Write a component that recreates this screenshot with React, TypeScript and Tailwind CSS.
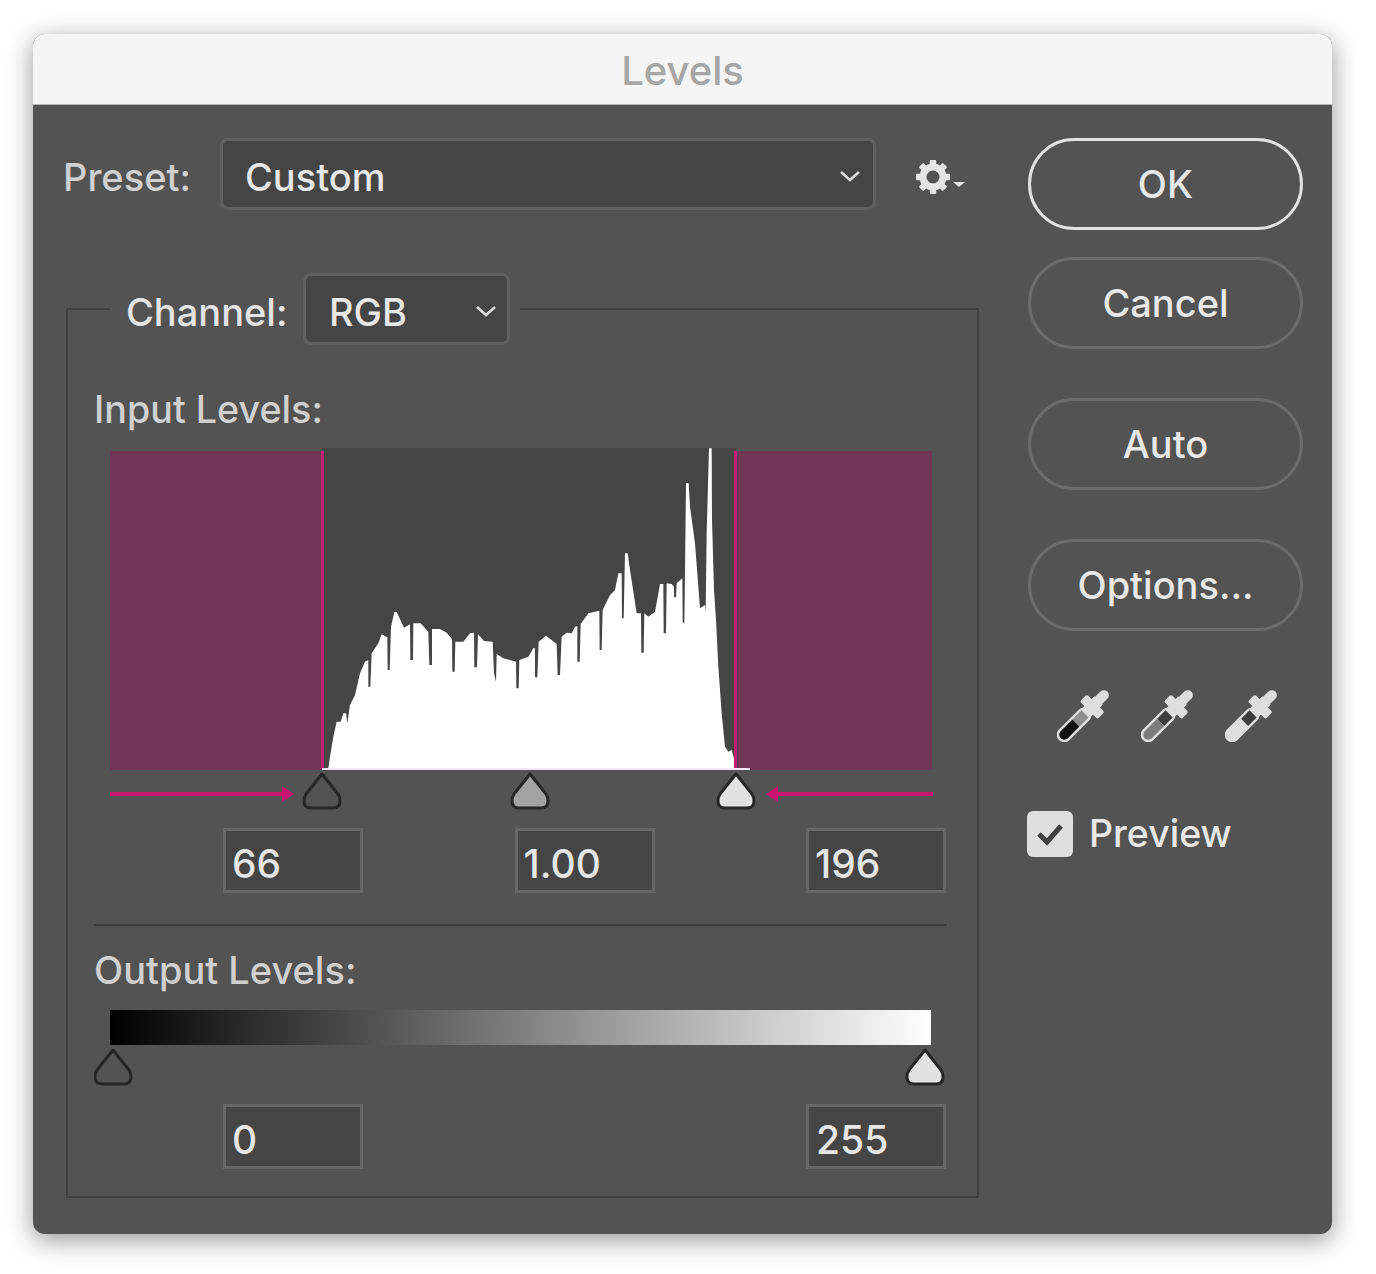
import React from "react";

const HIST: [number, number][] = [
  [70,985],[85,985],[90,950],[100,890],[110,845],[122,845],[130,820],[138,820],[142,850],[150,795],[165,765],[180,700],[195,665],[205,660],[205,740],[211,740],[215,640],[235,610],[245,583],[262,592],[263,690],[269,690],[273,560],[283,516],[290,516],[312,563],[330,553],[331,660],[339,660],[340,550],[362,550],[385,575],[388,675],[396,675],[396,567],[420,567],[440,578],[456,597],[457,695],[464,695],[466,605],[490,605],[510,580],[522,578],[523,682],[531,682],[534,583],[552,603],[578,605],[582,700],[588,725],[590,642],[610,655],[648,665],[649,745],[656,745],[658,660],[685,650],[700,625],[705,625],[705,712],[712,712],[716,605],[738,587],[770,612],[773,705],[780,705],[785,590],[800,578],[815,580],[825,560],[832,558],[832,665],[839,665],[842,552],[865,520],[898,512],[899,630],[905,630],[908,510],[930,465],[945,450],[955,400],[965,400],[966,535],[971,535],[975,340],[983,340],[990,390],[1010,520],[1023,520],[1024,638],[1031,638],[1033,520],[1045,530],[1065,515],[1080,432],[1090,432],[1091,580],[1098,580],[1100,430],[1115,432],[1122,440],[1122,472],[1128,472],[1130,430],[1147,415],[1148,548],[1153,548],[1155,400],[1158,130],[1166,130],[1170,200],[1185,310],[1200,505],[1215,495],[1217,515],[1220,280],[1227,25],[1235,25],[1236,240],[1242,450],[1248,540],[1255,680],[1265,820],[1275,920],[1285,935],[1295,930],[1303,960],[1305,985],
];
const histPoints = HIST.map(([x, y]) => `${300 + x / 3},${440 + y / 3}`).join(" ");

const THUMB = "M0 1 L16 21 Q18 24 18 28 Q18 35 11 35 H-11 Q-18 35 -18 28 Q-18 24 -16 21 Z";
function Thumb({ x, y, fill }: { x: number; y: number; fill: string }) {
  return <path d={THUMB} transform={`translate(${x} ${y})`} fill={fill} stroke="#262626" strokeWidth={3} strokeLinejoin="round" />;
}

function Histogram() {
  return (
    <svg width={822} height={322} viewBox="110 448 822 322" className="block">
      <rect x={322} y={448} width={414} height={322} fill="#454545" />
      <rect x={110} y={451} width={212} height={319} fill="#713655" />
      <rect x={735} y={451} width={197} height={319} fill="#713655" />
      <polygon points={histPoints} fill="#ffffff" />
      <rect x={321} y={451} width={3} height={318} fill="#b9216f" />
      <rect x={734} y={451} width={3} height={318} fill="#b9216f" />
      <rect x={322} y={768} width={428} height={2} fill="#f4e6ee" />
    </svg>
  );
}

function InputSliders() {
  return (
    <svg width={852} height={44} viewBox="94 770 852 44" className="block">
      <line x1={110} y1={794} x2={284} y2={794} stroke="#c8146f" strokeWidth={4} />
      <polygon points="294,794 282,786 282,802" fill="#c8146f" />
      <line x1={933} y1={794} x2={778} y2={794} stroke="#c8146f" strokeWidth={4} />
      <polygon points="766,794 778,786 778,802" fill="#c8146f" />
      <Thumb x={322} y={773} fill="#535353" />
      <Thumb x={530} y={773} fill="#a3a3a3" />
      <Thumb x={736} y={773} fill="#e2e2e2" />
    </svg>
  );
}

function OutputSliders() {
  return (
    <svg width={852} height={44} viewBox="94 1045 852 44" className="block">
      <Thumb x={113} y={1049} fill="#535353" />
      <Thumb x={925} y={1049} fill="#e2e2e2" />
    </svg>
  );
}

function Chevron() {
  return (
    <svg width={22} height={14} viewBox="0 0 22 14" fill="none" className="shrink-0 mt-[3px]">
      <path d="M2 3 L11 11 L20 3" stroke="#dcdcdc" strokeWidth={2.6} />
    </svg>
  );
}

function Gear() {
  const teeth = [0, 45, 90, 135, 180, 225, 270, 315];
  return (
    <svg width={50} height={36} viewBox="0 0 50 36" className="block">
      <g transform="translate(17 18)" fill="#e4e4e4">
        {teeth.map((a) => (
          <rect key={a} x={-3.2} y={-17} width={6.4} height={8} rx={1} transform={`rotate(${a})`} />
        ))}
        <circle r={10} fill="none" stroke="#e4e4e4" strokeWidth={7} />
      </g>
      <polygon points="37,23 49,23 43,28" fill="#e4e4e4" />
    </svg>
  );
}

function Dropper({ kind }: { kind: 0 | 1 | 2 }) {
  const light = "#dedede";
  return (
    <svg width={52} height={52} viewBox="-1 -1 52 52" className="block">
      <g transform="rotate(45 25 25)">
        <rect x={20} y={-9.5} width={10} height={24} rx={5} fill={light} />
        <rect x={12.5} y={7} width={25} height={10} rx={2} fill={light} />
        <rect x={19} y={3} width={12} height={18} fill={light} />
        <rect x={17.5} y={16} width={15} height={43} rx={7.5} fill={light} />
        {kind === 0 && (
          <>
            <rect x={20} y={22} width={10} height={13} fill="#8f8f8f" />
            <path d="M20 35 H30 V51.5 a5 5 0 0 1 -10 0 Z" fill="#111111" />
          </>
        )}
        {kind === 1 && (
          <>
            <rect x={20} y={22} width={10} height={12} fill="#3d3d3d" />
            <path d="M20 34 H30 V51.5 a5 5 0 0 1 -10 0 Z" fill="#7c7c7c" />
          </>
        )}
        {kind === 2 && <rect x={20} y={22} width={10} height={12} fill="#3d3d3d" />}
      </g>
    </svg>
  );
}

function Field({ value, pad }: { value: string; pad: string }) {
  return (
    <div className={`w-[140px] h-[65px] bg-[#454545] border-[3px] border-[#666666] flex items-center pt-[8px] text-[39px] text-[#e6e6e6] ${pad}`}>
      {value}
    </div>
  );
}

function Btn({ label, primary, cls }: { label: string; primary?: boolean; cls: string }) {
  return (
    <div
      className={`w-[275px] h-[92px] rounded-[46px] border-[3px] flex items-center justify-center text-[38px] text-[#e8e8e8] ${
        primary ? "border-[#e2e2e2]" : "border-[#6c6c6c]"
      } ${cls}`}
    >
      {label}
    </div>
  );
}

export default function App() {
  return (
    <div className="w-[1376px] h-[1274px] bg-white pt-[34px] pl-[33px] font-['Inter',sans-serif] font-[450] overflow-hidden">
      <div className="w-[1299px] h-[1200px] rounded-[12px] bg-[#535353] shadow-[0_6px_26px_rgba(0,0,0,0.42)] overflow-hidden flex flex-col">
        <div className="h-[71px] pt-[3px] bg-[#f5f5f5] border-b border-[#b8b8b8] flex items-center justify-center text-[40px] text-[#a6a6a6] shrink-0">
          Levels
        </div>
        <div className="flex flex-1">
          <div className="w-[945px] shrink-0 pt-[33px]">
            <div className="flex items-center h-[72px] pl-[30px]">
              <div className="w-[157px] pt-[7px] text-[38px] text-[#d0d0d0]">Preset:</div>
              <div className="w-[656px] h-[72px] rounded-[8px] bg-[#454545] border-[3px] border-[#606060] flex items-center justify-between pl-[22px] pr-[12px] text-[38px] text-[#e8e8e8]">
                <span className="pt-[7px]">Custom</span>
                <Chevron />
              </div>
              <div className="ml-[40px] mt-[5px]">
                <Gear />
              </div>
            </div>

            <fieldset className="ml-[33px] mt-[63px] w-[912px] h-[925px] border-2 border-[#404040] pl-[26px] pr-[30px] pb-0">
              <legend className="ml-[16px] pl-[16px] pr-[10px]">
                <div className="flex items-center h-[72px]">
                  <div className="w-[177px] pt-[7px] text-[38px] text-[#e4e4e4]">Channel:</div>
                  <div className="w-[207px] h-[72px] rounded-[8px] bg-[#454545] border-[3px] border-[#606060] flex items-center justify-between pl-[23px] pr-[10px] text-[38px] text-[#e8e8e8]">
                    <span className="pt-[7px]">RGB</span>
                    <Chevron />
                  </div>
                </div>
              </legend>

              <div className="h-[44px] mt-[42px] flex items-center text-[37.7px] text-[#d0d0d0]">Input Levels:</div>
              <div className="mt-[17px] ml-[16px]">
                <Histogram />
              </div>
              <InputSliders />
              <div className="mt-[14px] ml-[129px] w-[723px] flex justify-between">
                <Field value="66" pad="pl-[6px]" />
                <Field value="1.00" pad="pl-[6px]" />
                <Field value="196" pad="pl-[6px]" />
              </div>
              <div className="mt-[31px] h-[2px] w-[853px] bg-[#3c3c3c]" />
              <div className="h-[44px] mt-[22px] flex items-center text-[38px] text-[#d0d0d0]">Output Levels:</div>
              <div className="mt-[18px] ml-[16px] w-[821px] h-[35px] bg-[linear-gradient(90deg,#000,#fff)]" />
              <OutputSliders />
              <div className="mt-[15px] ml-[129px] w-[723px] flex justify-between">
                <Field value="0" pad="pl-[6px]" />
                <Field value="255" pad="pl-[7px]" />
              </div>
            </fieldset>
          </div>

          <div className="ml-[50px] pt-[33px] flex flex-col">
            <Btn label="OK" primary cls="" />
            <Btn label="Cancel" cls="mt-[27px]" />
            <Btn label="Auto" cls="mt-[49px]" />
            <Btn label="Options..." cls="mt-[49px]" />
            <div className="mt-[59px] ml-[29px] flex gap-[32px]">
              <Dropper kind={0} />
              <Dropper kind={1} />
              <Dropper kind={2} />
            </div>
            <div className="mt-[64px] -ml-[1px] flex items-center gap-[16px]">
              <div className="w-[46px] h-[46px] rounded-[6px] bg-[#dedede] flex items-center justify-center">
                <svg width={30} height={26} viewBox="0 0 30 26" fill="none">
                  <path d="M4 13 L12 21 L26 5" stroke="#404040" strokeWidth={5} />
                </svg>
              </div>
              <span className="text-[37.5px] text-[#e8e8e8]">Preview</span>
            </div>
          </div>
        </div>
      </div>
    </div>
  );
}
